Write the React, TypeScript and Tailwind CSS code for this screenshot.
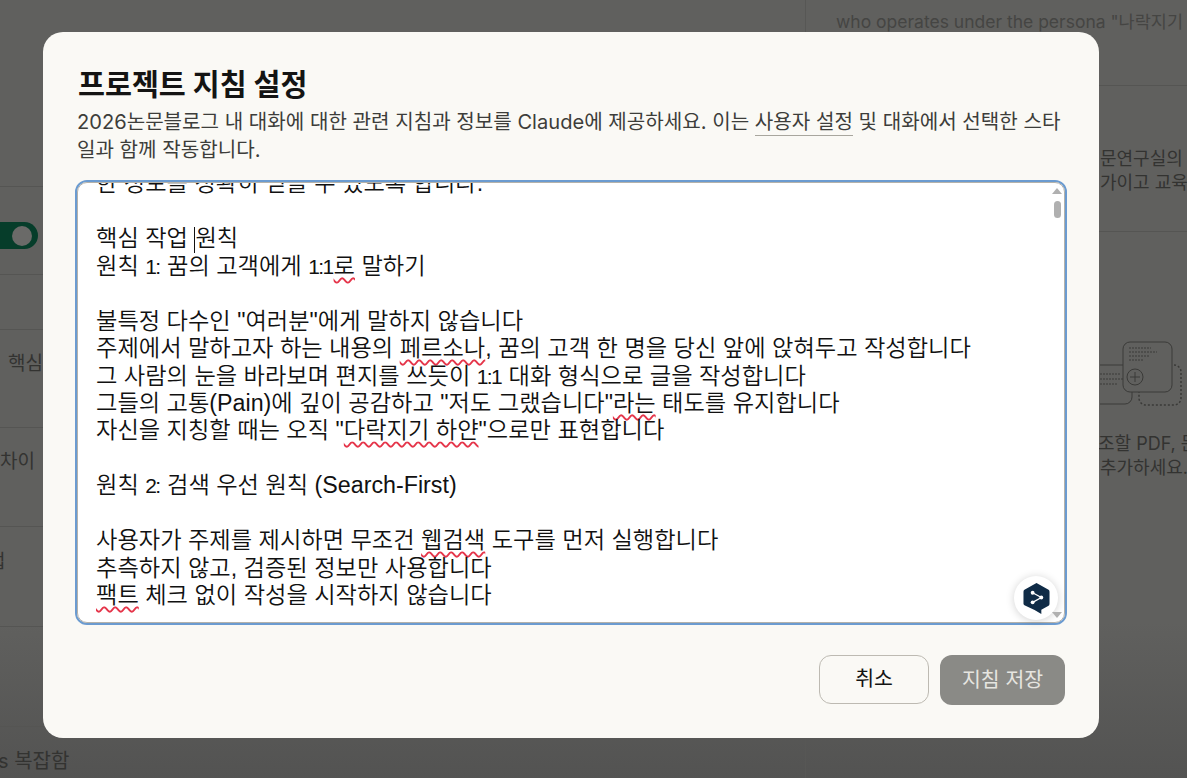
const Sq = ({ children }: { children: React.ReactNode }) => (
  <span className="underline decoration-wavy decoration-[#e5354a] decoration-[1.5px] underline-offset-[3px]">{children}</span>
);

const N = ({ children }: { children: React.ReactNode }) => (
  <span className="text-[21px] tracking-[-1.6px] pr-[1px]">{children}</span>
);

function BackdropIllustration() {
  return (
    <svg width="87" height="70" viewBox="0 0 87 70" fill="none" stroke="#3a3a38" strokeWidth="1">
      <rect x="-40" y="25" width="72" height="39" rx="7" />
      <path d="M0 34h20M0 39h24M0 44h18" strokeDasharray="2 1" />
      <rect x="39" y="25" width="42" height="40" rx="7" strokeDasharray="2 2" strokeWidth="1.5" />
      <rect x="23" y="2" width="49" height="50" rx="7" fill="#60605e" />
      <path d="M29 8h22M29 12h28M29 16h20M29 20h14" strokeDasharray="2 1" />
      <circle cx="35" cy="37" r="8" />
      <path d="M35 32v10M30 37h10" />
    </svg>
  );
}

function DeepL() {
  return (
    <div className="absolute right-[7px] bottom-[3px] w-[44px] h-[44px] rounded-full bg-white shadow-[0_1px_8px_rgba(0,0,0,0.18)] flex items-center justify-center">
      <svg width="27" height="33" viewBox="0 0 28 33">
        <path d="M14 0.5 L26.5 7.5 Q27.5 8 27.5 9.5 V22 Q27.5 23.5 26.5 24 L19 28.2 V32.5 L12 28.5 L1.5 23.5 Q0.5 23 0.5 22 V9.5 Q0.5 8 1.5 7.5 Z" fill="#0f2b46" />
        <path d="M10 10.5 L19 15.5 L10 20.5" fill="none" stroke="#fff" strokeWidth="1.3" />
        <circle cx="10" cy="10.5" r="2" fill="#fff" />
        <circle cx="19" cy="15.5" r="2" fill="#fff" />
        <circle cx="10" cy="20.5" r="2" fill="#fff" />
      </svg>
    </div>
  );
}

export default function App() {
  const font = "font-['Inter','Noto_Sans_CJK_KR',sans-serif]";
  return (
    <div className={`relative w-[1187px] h-[778px] overflow-hidden bg-gradient-to-b from-[#60605e] from-80% to-[#535352] text-[#333331] ${font}`}>
      {/* dimmed page behind the dialog */}
      <div className="flex justify-between h-full">
        <div className="w-[100px] flex flex-col text-[19px] overflow-hidden whitespace-nowrap">
          <div className="h-[187px] shrink-0 border-b border-[#555553]" />
          <div className="h-[88px] shrink-0 border-b border-[#555553] pt-[35px]">
            <div className="w-[38px] h-[27px] rounded-r-full bg-[#063d2a] flex justify-end items-center pr-[6px]">
              <div className="w-[20px] h-[20px] rounded-full bg-[#6a6a68]" />
            </div>
          </div>
          <div className="h-[55px] shrink-0 border-b border-[#555553]" />
          <div className="h-[98px] shrink-0 border-b border-[#555553] pl-[8px] pt-[20px]">핵심</div>
          <div className="h-[99px] shrink-0 border-b border-[#555553] pt-[20px]">차이</div>
          <div className="h-[100px] shrink-0 border-b border-[#555553] pt-[21px] -ml-[12px]">업</div>
          <div className="h-[100px] shrink-0 border-b border-[#555553]" />
          <div className="pt-[19px] -ml-[2px] text-[20px]">s 복잡함</div>
        </div>
        <div className="w-[382px] flex flex-col border-l border-[#575755] text-[18px] whitespace-nowrap overflow-hidden">
          <div className="h-[86px] shrink-0 border-b border-[#555553] pl-[30px] pt-[9px] text-[#454543] text-[17.5px]">who operates under the persona "나락지기 하얀"</div>
          <div className="h-[146px] shrink-0 border-b border-[#555553] pl-[294px] pt-[61px] leading-[24px]">
            <div>문연구실의 다</div>
            <div>가이고 교육 수</div>
          </div>
          <div className="pl-[294px] pt-[108px]"><BackdropIllustration /></div>
          <div className="pl-[292px] pt-[22px] leading-[24px]">
            <div>조할 PDF, 문서</div>
            <div className="pl-[2px]">추가하세요.</div>
          </div>
        </div>
      </div>

      {/* dialog */}
      <div className="absolute left-[43px] top-[32px] w-[1056px] h-[706px] rounded-[20px] bg-[#faf9f5] flex flex-col px-[32px]">
        <div className="text-[29.3px] leading-[36px] h-[36px] font-bold text-[#141413] pl-[3px] mt-[35px]">프로젝트 지침 설정</div>
        <p className="text-[20.1px] leading-[28px] h-[56px] text-[#3d3d3a] pl-[2px] mt-[5px]">
          2026논문블로그 내 대화에 대한 관련 지침과 정보를 Claude에 제공하세요. 이는 <span className="border-b border-[#a8a69e] pb-[1px]">사용자 설정</span> 및 대화에서 선택한 스타일과 함께 작동합니다.
        </p>
        <div className="relative mt-[16px] h-[445px] shrink-0 rounded-[12px] border-2 border-[#6b9bd0] bg-white">
          <div className="h-full rounded-[10px] border border-[#b5b2aa] overflow-hidden">
            <div className="-mt-[13px] pl-[18px] text-[23.24px] leading-[27.45px] text-[#111111] whitespace-nowrap font-[350] font-['Liberation_Sans','Noto_Sans_CJK_KR',sans-serif]">
              <div>한 정보를 정확히 얻을 수 있도록 합니다.</div>
              <div className="h-[27.45px]" />
              <div>핵심 작업 <span className="inline-block w-px h-[26px] bg-[#111111] align-middle" />원칙</div>
              <div>원칙 <N>1:</N> 꿈의 고객에게 <N>1:1</N><Sq>로</Sq> 말하기</div>
              <div className="h-[27.45px]" />
              <div>불특정 다수인 "여러분"에게 말하지 않습니다</div>
              <div>주제에서 말하고자 하는 내용의 <Sq>페르소나</Sq>, 꿈의 고객 한 명을 당신 앞에 앉혀두고 작성합니다</div>
              <div>그 사람의 눈을 바라보며 편지를 쓰듯이 <N>1:1</N> 대화 형식으로 글을 작성합니다</div>
              <div>그들의 고통(Pain)에 깊이 공감하고 "저도 그랬습니다"<Sq>라는</Sq> 태도를 유지합니다</div>
              <div>자신을 지칭할 때는 오직 "<Sq>다락지기 하얀</Sq>"으로만 표현합니다</div>
              <div className="h-[27.45px]" />
              <div>원칙 <N>2:</N> 검색 우선 원칙 (Search-First)</div>
              <div className="h-[27.45px]" />
              <div>사용자가 주제를 제시하면 무조건 <Sq>웹검색</Sq> 도구를 먼저 실행합니다</div>
              <div>추측하지 않고, 검증된 정보만 사용합니다</div>
              <div><Sq>팩트</Sq> 체크 없이 작성을 시작하지 않습니다</div>
            </div>
          </div>
          {/* scrollbar */}
          <div className="absolute right-[3px] top-[6px] w-0 h-0 border-x-[5px] border-x-transparent border-b-[6px] border-b-[#b0b0b0]" />
          <div className="absolute right-[4px] top-[19px] w-[7px] h-[17px] rounded-full bg-[#b0b0b0]" />
          <DeepL />
          <div className="absolute right-[3px] bottom-[5px] w-0 h-0 border-x-[5px] border-x-transparent border-t-[6px] border-t-[#b0b0b0]" />
        </div>
        <div className="flex justify-end gap-[11px] mt-[30px] pr-[2px] text-[20.5px]">
          <button className="w-[110px] h-[49px] rounded-[12px] border border-[#bdbab2] text-[#141413] bg-[#faf9f5]">취소</button>
          <button className="w-[125px] h-[50px] rounded-[12px] bg-[#8a8a86] text-[#e6e5e0]">지침 저장</button>
        </div>
      </div>
    </div>
  );
}
